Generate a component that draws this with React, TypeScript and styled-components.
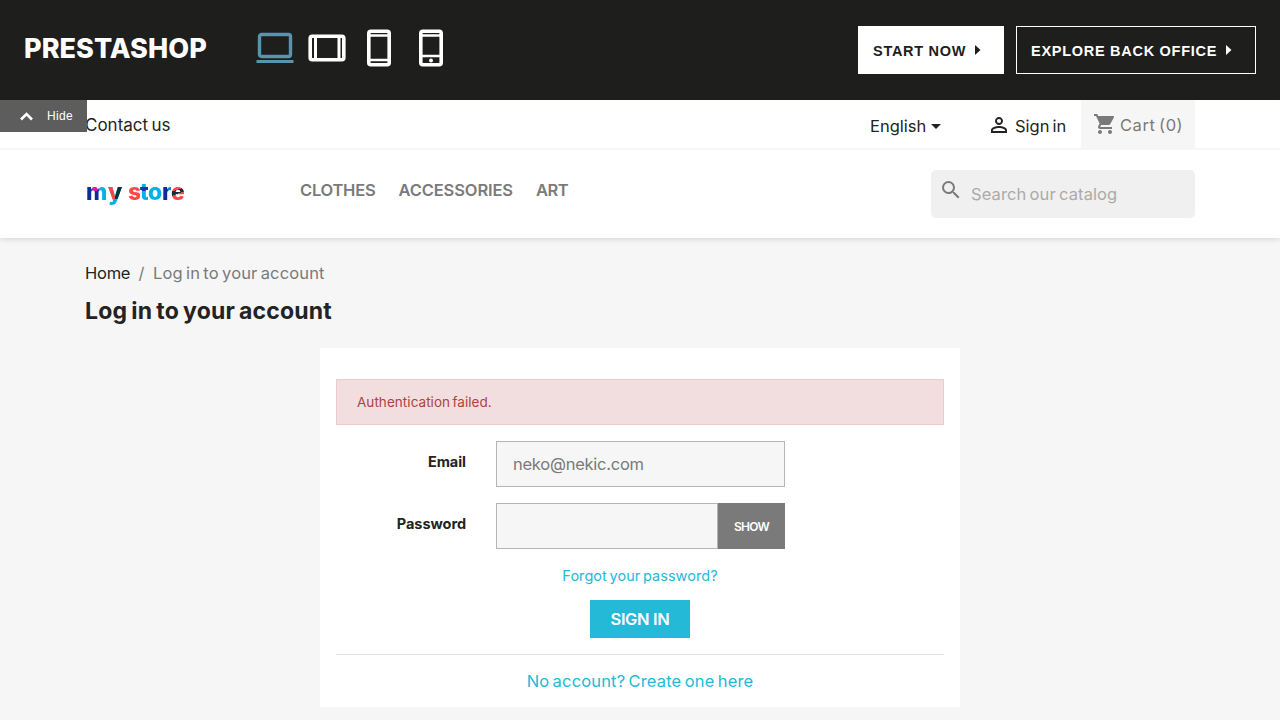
import React from "react";
import styled, { createGlobalStyle } from "styled-components";
import { MdArrowDropDown, MdPersonOutline, MdSearch, MdShoppingCart } from "react-icons/md";

const GlobalStyle = createGlobalStyle`
  * { box-sizing: border-box; }
  html, body { margin: 0; background: #f6f6f6; }
  body {
    height: 720px;
    overflow: hidden;
    font-family: Inter, "Liberation Sans", sans-serif;
    font-size: 16.5px;
    word-spacing: -1.5px;
    color: #232323;
  }
  a { color: inherit; text-decoration: none; }
  input, button { font-family: inherit; margin: 0; border-radius: 0; outline: 0; }
`;

const DemoBar = styled.header`
  display: flex;
  align-items: center;
  height: 100px;
  padding: 0 24px;
  background: #1e1e1c;
`;

const Brand = styled.a`
  width: 232px;
  padding-bottom: 3px;
  color: #fff;
  font-size: 27px;
  font-weight: 800;
  line-height: 32px;
  letter-spacing: 0.05px;
`;

const Devices = styled.nav`
  display: flex;
  gap: 14px;
  padding-bottom: 4px;
  margin-right: auto;

  svg { display: block; width: 38px; height: 38px; fill: none; }
`;

const DemoActions = styled.div`
  display: flex;
  gap: 12px;
`;

const DemoButton = styled.a<{ $solid?: boolean; $width: number }>`
  display: flex;
  align-items: center;
  width: ${(p) => p.$width}px;
  height: 48px;
  padding: 1px 0 0 14px;
  border: 1px solid #fff;
  background: ${(p) => (p.$solid ? "#fff" : "transparent")};
  color: ${(p) => (p.$solid ? "#1e1e1c" : "#fff")};
  font: 700 14.5px "Liberation Sans", Arial, sans-serif;
  letter-spacing: 0.72px;
  word-spacing: 0;
  white-space: nowrap;

  svg { margin: -2px 0 0 9px; fill: currentColor; }
`;

const Hide = styled.button`
  position: absolute;
  left: 0;
  top: 100px;
  display: flex;
  align-items: center;
  gap: 14px;
  width: 87px;
  height: 32px;
  padding: 0 0 0 20px;
  border: 0;
  background: #5d5d5d;
  color: #fff;
  font: 12px "Liberation Sans", Arial, sans-serif;
  letter-spacing: 0.3px;
`;

const StoreHeader = styled.div`
  height: 138px;
  background: #fff;
  box-shadow: 0 2px 5px 0 rgba(0, 0, 0, 0.11);
`;

const Container = styled.div`
  width: 1110px;
  margin: 0 auto;
`;

const TopLine = styled.div`
  height: 50px;
  border-bottom: 2px solid #f6f6f6;
`;

const TopRow = styled(Container)`
  display: flex;
  height: 48px;
  line-height: 20px;
  white-space: nowrap;
`;

const ContactLink = styled.a`
  margin: 15px auto 0 0;
  font-size: 17px;
  letter-spacing: 0;
`;

const Language = styled.div`
  display: flex;
  width: 118px;
  padding-top: 16px;
  letter-spacing: 0;

  svg { margin: -2px 0 0 -2px; }
`;

const SignInLink = styled.a`
  display: flex;
  gap: 4px;
  width: 93px;
  padding-top: 16px;
  letter-spacing: 0;

  svg { margin: -3px 0 0 -1px; }
`;

const Cart = styled.div`
  display: flex;
  gap: 3px;
  width: 114px;
  height: 48px;
  padding: 15px 0 0 12px;
  background: #f6f6f6;
  color: #7a7a7a;
  letter-spacing: 0.55px;

  svg { margin-top: -3px; }
`;

const MainRow = styled(Container)`
  display: flex;
  height: 88px;
  padding-top: 20px;
`;

const Logo = styled.a`
  display: flex;
  width: 215px;
  padding: 6px 0 0 1px;
  font-size: 23px;
  font-weight: 800;
  line-height: 32px;
`;

const LogoLetter = styled.span<{ $width: number; $paint: string }>`
  width: ${(p) => p.$width}px;
  height: 32px;
  color: transparent;
  background: ${(p) => p.$paint};
  background-clip: text;
  -webkit-background-clip: text;
`;

const Menu = styled.nav`
  display: flex;
  gap: 23px;
  margin-right: auto;
  padding-top: 10px;
  color: #7a7a7a;
  font-size: 16.5px;
  font-weight: 600;
  line-height: 20px;
`;

const MenuLink = styled.a<{ $spacing: number }>`
  letter-spacing: ${(p) => p.$spacing}px;
`;

const Search = styled.label`
  display: flex;
  gap: 8px;
  width: 264px;
  height: 48px;
  padding: 8px 0 0 8px;
  border-radius: 5px;
  background: #f0f0f0;
  color: #7a7a7a;

  input {
    width: 210px;
    height: 32px;
    padding: 0;
    border: 0;
    background: transparent;
    font-size: 16.5px;
    letter-spacing: 0.1px;
    word-spacing: -1.5px;
  }
  input::placeholder { color: #acaaa6; opacity: 1; }
`;

const Breadcrumb = styled.nav`
  display: flex;
  padding-top: 25px;
  color: #7a7a7a;
  line-height: 20px;
  letter-spacing: 0.14px;

  a { width: 45px; color: #232323; letter-spacing: -0.25px; }
  i { width: 23px; text-align: center; font-style: normal; }
`;

const Title = styled.h1`
  margin: 12px 0 0;
  font-size: 23px;
  font-weight: 700;
  line-height: 32px;
  letter-spacing: 0.17px;
`;

const Card = styled.main`
  width: 640px;
  height: 359px;
  margin: 21px auto 0;
  padding: 31px 16px 0;
  background: #fff;
`;

const Alert = styled.div`
  height: 46px;
  margin-bottom: 16px;
  padding-left: 20px;
  border: 1px solid #ebcccc;
  background: #f2dede;
  color: #a94442;
  font-size: 13.5px;
  line-height: 44px;
  letter-spacing: 0.05px;
`;

const Field = styled.label`
  display: flex;
  height: 46px;
  margin-bottom: 16px;
`;

const FieldName = styled.span`
  width: 130px;
  margin-right: 30px;
  padding-top: 11px;
  text-align: right;
  font-size: 14.5px;
  font-weight: 700;
  line-height: 20px;
  letter-spacing: -0.05px;
`;

const TextInput = styled.input<{ $width: number }>`
  width: ${(p) => p.$width}px;
  height: 46px;
  padding: 0 16px;
  border: 1px solid #b5b5b5;
  background: #f6f6f6;
  color: #7a7a7a;
  font-size: 16.5px;
  letter-spacing: -0.25px;
`;

const ShowButton = styled.button`
  width: 67px;
  height: 46px;
  padding: 0;
  border: 0;
  background: #7a7a7a;
  color: #fff;
  font-size: 12px;
  font-weight: 600;
  letter-spacing: -0.8px;
`;

const Footer = styled.div`
  display: flex;
  flex-direction: column;
  align-items: center;
`;

const ForgotLink = styled.a`
  margin-top: 1px;
  color: #24b9d7;
  font-size: 14.5px;
  line-height: 20px;
  letter-spacing: 0.05px;
`;

const SubmitButton = styled.button`
  width: 100px;
  height: 38px;
  margin: 14px 0 16px;
  padding: 0;
  border: 0;
  background: #24b9d7;
  color: #fff;
  font-size: 16.5px;
  font-weight: 600;
  letter-spacing: -0.35px;
`;

const CreateAccount = styled.div`
  width: 100%;
  padding-top: 16px;
  border-top: 1px solid #e0e0e0;
  color: #24b9d7;
  line-height: 20px;
  text-align: center;
  letter-spacing: 0.16px;
`;

const logoLetters = [
  { char: "m", width: 22, paint: "linear-gradient(90deg, transparent 6px, #d31cb4 6px 11px, transparent 11px) 0 0/100% 15px no-repeat, linear-gradient(90deg, #0c2a9c 6px, #00aadf 6px 8px, #0c2a9c 8px 13px, #00b3e5 13px)" },
  { char: "y", width: 20, paint: "linear-gradient(90deg, #ff4747 7px, #06323c 7px) 0 0/100% 23px no-repeat, linear-gradient(#00b3e5, #00b3e5)" },
  { char: "s", width: 12, paint: "#ff4747" },
  { char: "t", width: 8, paint: "linear-gradient(transparent 11px, #1b35a9 11px 15px, transparent 15px), linear-gradient(#00b3e5, #00b3e5)" },
  { char: "o", width: 14, paint: "#00b3e5" },
  { char: "r", width: 9, paint: "linear-gradient(90deg, #0c2a9c 6px, #008fd2 6px)" },
  { char: "e", width: 14, paint: "linear-gradient(160deg, #ff4747 15px, #06323c 15px 19px, #ff4747 19px)" },
];

const Arrow = () => (
  <svg width="6" height="10" viewBox="0 0 6 10"><path d="M0 0l5.5 5L0 10z" /></svg>
);

export default function App() {
  return (
    <>
      <GlobalStyle />
      <DemoBar>
        <Brand>PRESTASHOP</Brand>
        <Devices>
          <svg viewBox="0 0 38 38" stroke="#5b93af" strokeWidth="3.4">
            <rect x="3.5" y="5.5" width="31" height="22" rx="2" />
            <path d="M.5 32.5h37" strokeWidth="3" />
          </svg>
          <svg viewBox="0 0 38 38" stroke="#fff" strokeWidth="3.6">
            <rect x="2.2" y="7.2" width="33.6" height="23.6" rx="2" />
            <path d="M7.5 7v24M31 7v24" strokeWidth="3" />
          </svg>
          <svg viewBox="0 0 38 38" stroke="#fff" strokeWidth="3.6">
            <rect x="8.8" y="2.2" width="20.4" height="33.6" rx="2" />
            <path d="M8.5 6.5h21M8.5 31h21" strokeWidth="2.6" />
          </svg>
          <svg viewBox="0 0 38 38" stroke="#fff" strokeWidth="3.6">
            <rect x="8.8" y="2.2" width="20.4" height="33.6" rx="2" />
            <path d="M8.5 6.5h21M8.5 27h21" strokeWidth="2.6" />
            <circle cx="19" cy="31.5" r="2" fill="#fff" stroke="none" />
          </svg>
        </Devices>
        <DemoActions>
          <DemoButton $solid $width={146}>START NOW<Arrow /></DemoButton>
          <DemoButton $width={240}>EXPLORE BACK OFFICE<Arrow /></DemoButton>
        </DemoActions>
      </DemoBar>
      <StoreHeader>
        <TopLine>
          <TopRow>
            <ContactLink>Contact us</ContactLink>
            <Language>English<MdArrowDropDown size={24} /></Language>
            <SignInLink><MdPersonOutline size={24} />Sign in</SignInLink>
            <Cart><MdShoppingCart size={24} />Cart (0)</Cart>
          </TopRow>
        </TopLine>
        <MainRow>
          <Logo>
            {logoLetters.map((l) => (
              <LogoLetter key={l.char} $width={l.width} $paint={l.paint}>{l.char}</LogoLetter>
            ))}
          </Logo>
          <Menu>
            <MenuLink $spacing={-0.24}>CLOTHES</MenuLink>
            <MenuLink $spacing={-0.12}>ACCESSORIES</MenuLink>
            <MenuLink $spacing={-0.5}>ART</MenuLink>
          </Menu>
          <Search>
            <MdSearch size={24} />
            <input placeholder="Search our catalog" />
          </Search>
        </MainRow>
      </StoreHeader>
      <Hide>
        <svg width="13" height="9" viewBox="0 0 13 9" fill="none" stroke="#fff" strokeWidth="2.6">
          <path d="M1 7.5l5.5-5.4L12 7.5" />
        </svg>
        Hide
      </Hide>
      <Container>
        <Breadcrumb><a>Home</a><i>/</i><span>Log in to your account</span></Breadcrumb>
        <Title>Log in to your account</Title>
        <Card>
          <Alert>Authentication failed.</Alert>
          <Field>
            <FieldName>Email</FieldName>
            <TextInput $width={289} defaultValue="neko@nekic.com" />
          </Field>
          <Field>
            <FieldName>Password</FieldName>
            <TextInput $width={222} type="password" />
            <ShowButton>SHOW</ShowButton>
          </Field>
          <Footer>
            <ForgotLink>Forgot your password?</ForgotLink>
            <SubmitButton>SIGN IN</SubmitButton>
            <CreateAccount>No account? Create one here</CreateAccount>
          </Footer>
        </Card>
      </Container>
    </>
  );
}
